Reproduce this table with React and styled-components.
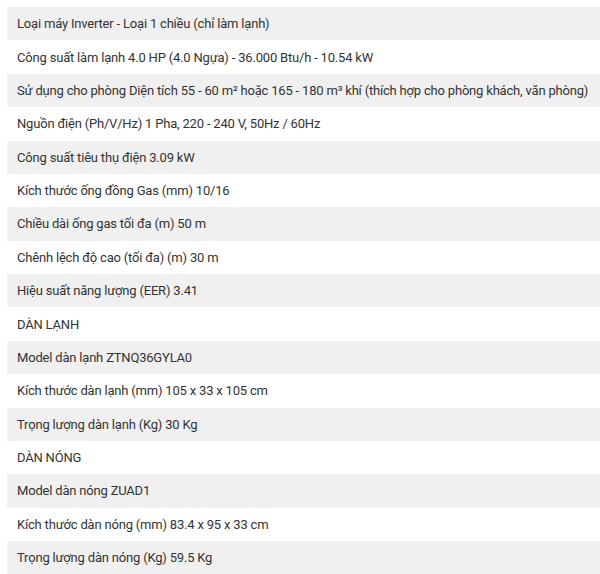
import React from "react";
import styled, { createGlobalStyle } from "styled-components";

const specs = [
  "Loại máy Inverter - Loại 1 chiều (chỉ làm lạnh)",
  "Công suất làm lạnh 4.0 HP (4.0 Ngựa) - 36.000 Btu/h - 10.54 kW",
  "Sử dụng cho phòng Diện tích 55 - 60 m² hoặc 165 - 180 m³ khí (thích hợp cho phòng khách, văn phòng)",
  "Nguồn điện (Ph/V/Hz) 1 Pha, 220 - 240 V, 50Hz / 60Hz",
  "Công suất tiêu thụ điện 3.09 kW",
  "Kích thước ống đồng Gas (mm) 10/16",
  "Chiều dài ống gas tối đa (m) 50 m",
  "Chênh lệch độ cao (tối đa) (m) 30 m",
  "Hiệu suất năng lượng (EER) 3.41",
  "DÀN LẠNH",
  "Model dàn lạnh ZTNQ36GYLA0",
  "Kích thước dàn lạnh (mm) 105 x 33 x 105 cm",
  "Trọng lượng dàn lạnh (Kg) 30 Kg",
  "DÀN NÓNG",
  "Model dàn nóng ZUAD1",
  "Kích thước dàn nóng (mm) 83.4 x 95 x 33 cm",
  "Trọng lượng dàn nóng (Kg) 59.5 Kg",
];

function App() {
  return (
    <>
      <GlobalStyle />
      <Page>
        <SpecList>
          {specs.map((text, index) => (
            <SpecRow key={index} $striped={index % 2 === 0}>
              {text}
            </SpecRow>
          ))}
        </SpecList>
      </Page>
    </>
  );
}

const GlobalStyle = createGlobalStyle`
  html, body {
    margin: 0;
    background: #ffffff;
    overflow: hidden;
  }
`;

const Page = styled.div`
  padding: 7px 0 0 7px;
`;

const SpecList = styled.div`
  display: flex;
  flex-direction: column;
`;

const SpecRow = styled.div`
  display: flex;
  align-items: center;
  height: 33.38px;
  padding-left: 10px;
  background-color: ${(p) => (p.$striped ? "#f0f0f0" : "#ffffff")};
  color: #333333;
  font-family: Roboto, "Liberation Sans", sans-serif;
  font-size: 13px;
  letter-spacing: -0.19px;
  white-space: nowrap;
`;

export default App;
